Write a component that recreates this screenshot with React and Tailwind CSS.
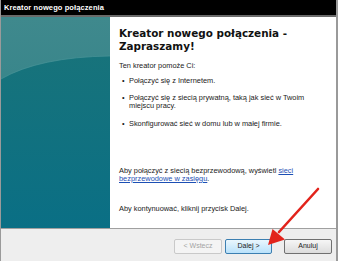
import React from "react";

function Bullet({ children }) {
  return (
    <div className="flex">
      <span className="w-[10px] pl-[3px] shrink-0">•</span>
      <span>{children}</span>
    </div>
  );
}

export default function App() {
  return (
    <div className="relative w-[340px] h-[261px] bg-white overflow-hidden font-['Liberation_Sans',Arial,sans-serif]">
      <div className="flex flex-col w-[338px] h-full border-l border-r-2 border-[#9a9a9a]">
        <div className="h-[15px] bg-black text-white font-bold text-[7.5px] leading-[15px] pl-[3px] tracking-[0.1px]">
          Kreator nowego połączenia
        </div>
        <div className="h-[2px] bg-[#6a6a6a]" />
        <div className="flex h-[211px]">
          <div className="w-[109px] h-full shrink-0">
            <svg width="109" height="211" viewBox="0 0 109 211" className="block">
              <defs>
                <linearGradient id="top" x1="0" y1="0" x2="0" y2="1">
                  <stop offset="0" stopColor="#3f898d" />
                  <stop offset="1" stopColor="#2c7f86" />
                </linearGradient>
                <linearGradient id="bot" x1="0" y1="0" x2="0" y2="1">
                  <stop offset="0" stopColor="#17737b" />
                  <stop offset="1" stopColor="#0a6f85" />
                </linearGradient>
              </defs>
              <rect x="0" y="0" width="109" height="211" fill="url(#top)" />
              <path d="M0 62 Q 38 40 109 39 L109 211 L0 211 Z" fill="url(#bot)" />
              <path d="M0 62 Q 38 40 109 39" fill="none" stroke="#4a9499" strokeWidth="1" opacity="0.7" />
            </svg>
          </div>
          <div className="flex-1 bg-white pl-[9px] pt-[10px] text-[#1a1a1a]">
            <div className="font-['DejaVu_Sans',Verdana,sans-serif] font-bold text-[10.4px] leading-[13px] text-[#111]">
              Kreator nowego połączenia -<br />Zapraszamy!
            </div>
            <div className="text-[7.4px] leading-[8px]">
              <div className="mt-[9px]">Ten kreator pomoże Ci:</div>
              <div className="mt-[7px]">
                <Bullet>Połączyć się z Internetem.</Bullet>
              </div>
              <div className="mt-[9px]">
                <Bullet>
                  Połączyć się z siecią prywatną, taką jak sieć w Twoim
                  <br />
                  miejscu pracy.
                </Bullet>
              </div>
              <div className="mt-[10px]">
                <Bullet>Skonfigurować sieć w domu lub w małej firmie.</Bullet>
              </div>
              <div className="mt-[39px]">
                Aby połączyć z siecią bezprzewodową, wyświetl{" "}
                <span className="text-[#1c4fb4] underline">sieci</span>
                <br />
                <span className="text-[#1c4fb4] underline">bezprzewodowe w zasięgu</span>.
              </div>
              <div className="mt-[22px]">Aby kontynuować, kliknij przycisk Dalej.</div>
            </div>
          </div>
        </div>
        <div className="h-px bg-[#a0a0a0]" />
        <div className="flex-1 bg-[#eeeeee] flex items-start justify-end pt-[10px] pr-[4px] text-[7px]">
          <div className="w-[48px] h-[15px] rounded-[2px] border border-[#c9c9c9] bg-[#f4f4f4] text-[#a3a3a3] flex items-center justify-center">
            &lt; Wstecz
          </div>
          <div className="ml-[3px] w-[47px] h-[15px] rounded-[2px] border border-[#3c7fb1] bg-gradient-to-b from-[#eaf6fd] to-[#b9e2fb] text-[#1a1a1a] flex items-center justify-center">
            Dalej &gt;
          </div>
          <div className="ml-[12px] w-[48px] h-[15px] rounded-[2px] border border-[#707070] bg-gradient-to-b from-[#f6f6f6] to-[#dcdcdc] text-[#1a1a1a] flex items-center justify-center">
            Anuluj
          </div>
        </div>
      </div>
      <svg className="absolute inset-0 pointer-events-none" width="340" height="261" viewBox="0 0 340 261">
        <line x1="318" y1="189" x2="279" y2="232" stroke="#e2231b" strokeWidth="2.6" strokeLinecap="round" />
        <polygon points="268,245 272.5,229 285,239.5" fill="#e2231b" />
      </svg>
    </div>
  );
}
